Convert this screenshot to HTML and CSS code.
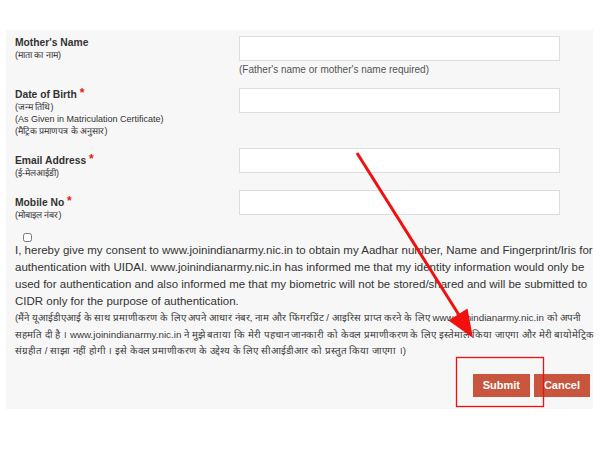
FILE: index.html
```html
<!DOCTYPE html>
<html lang="hi">
<head>
    <meta charset="UTF-8">
    <meta name="viewport" content="width=device-width, initial-scale=1.0">
    <title>Registration</title>

    <link rel="stylesheet" href="styles.css">
</head>
<body>
    <!-- formulario -->

    <div class="panel">
        <div class="row">
            <div class="label">
                <b>Mother's Name</b>
                <small>(माता का नाम)</small>
            </div>
            <div class="field">
                <input type="text">
                <p class="hint">(Father's name or mother's name required)</p>
            </div>
        </div>

        <div class="row">
            <div class="label">
                <b>Date of Birth <span class="req">*</span></b>
                <small>(जन्म तिथि)</small>
                <small>(As Given in Matriculation Certificate)</small>
                <small>(मैट्रिक प्रमाणपत्र के अनुसार)</small>
            </div>
            <div class="field">
                <input type="text">
            </div>
        </div>

        <div class="row low">
            <div class="label">
                <b>Email Address <span class="req">*</span></b>
                <small>(ई-मेलआईडी)</small>
            </div>
            <div class="field">
                <input type="text">
            </div>
        </div>

        <div class="row low last">
            <div class="label">
                <b>Mobile No <span class="req">*</span></b>
                <small>(मोबाइल नंबर)</small>
            </div>
            <div class="field">
                <input type="text">
            </div>
        </div>

        <div class="consent">
            <input type="checkbox" class="check">
            <p class="en">I, hereby give my consent to www.joinindianarmy.nic.in to obtain my Aadhar number, Name and Fingerprint/Iris for authentication with UIDAI. www.joinindianarmy.nic.in has informed me that my identity information would only be used for authentication and also informed me that my biometric will not be stored/shared and will be submitted to CIDR only for the purpose of authentication.</p>
            <p class="hi">(मैंने यूआईडीएआई के साथ प्रमाणीकरण के लिए अपने आधार नंबर, नाम और फिंगरप्रिंट / आइरिस प्राप्त करने के लिए www.joinindianarmy.nic.in को अपनी सहमति दी है । www.joinindianarmy.nic.in ने मुझे बताया कि मेरी पहचान जानकारी को केवल प्रमाणीकरण के लिए इस्तेमाल किया जाएगा और मेरी बायोमेट्रिक संग्रहीत / साझा नहीं होगी । इसे केवल प्रमाणीकरण के उद्देश्य के लिए सीआईडीआर को प्रस्तुत किया जाएगा ।)</p>
        </div>

        <div class="actions">
            <button class="btn">Submit</button>
            <button class="btn">Cancel</button>
        </div>
    </div>

    <!-- anotación -->
    <svg class="markup" width="600" height="450" viewBox="0 0 600 450">
        <line x1="357" y1="153" x2="459" y2="315" stroke="#f01010" stroke-width="3"/>
        <polygon points="473,338 448.5,320.5 467.5,308.5" fill="#f01010"/>
        <rect x="456.5" y="357.5" width="87" height="49" fill="none" stroke="#f01010" stroke-width="1.3"/>
    </svg>
</body>
</html>
```

FILE: styles.css
```css
body {
    font-family: "Liberation Sans", Arial, sans-serif;
    margin: 0;
    background-color: white;
    color: #333;
}

.panel {
    margin: 30px 7px 0 6px;
    padding: 6px 5px 12px 9px;
    background-color: #f7f7f7;
}

.row {
    display: grid;
    grid-template-columns: 224px 321px;
    margin-bottom: 11px;
}

.row.last {
    margin-bottom: 12px;
}

.label b {
    display: block;
    font-size: 10.3px;
    line-height: 13px;
}

.label small {
    display: block;
    font-size: 9px;
    line-height: 12px;
}

.row.low .label {
    padding-top: 6px;
}

.req {
    color: #e31b1b;
    font-size: 12px;
    vertical-align: top;
    line-height: 10px;
}

.field input {
    display: block;
    box-sizing: border-box;
    width: 321px;
    height: 25px;
    margin: 0;
    border: 1px solid #ddd;
    background-color: white;
}

.hint {
    margin: 2px 0 0;
    font-size: 10px;
    line-height: 14px;
    color: #555;
}

.check {
    display: block;
    width: 9px;
    height: 9px;
    margin: 0 0 0 8px;
}

.consent {
    margin-right: -8px;
}

.consent p {
    margin: 0;
}

.en {
    font-size: 11.5px;
    line-height: 17px;
    color: #333;
}

.hi {
    margin-top: -2px;
    font-size: 9.8px;
    line-height: 16.5px;
    color: #3a3a3a;
}

.actions {
    display: flex;
    justify-content: flex-end;
    gap: 4px;
    margin-top: 14px;
    margin-right: -2px;
}

.btn {
    height: 23px;
    padding: 0 10px;
    border: none;
    background-color: #c8553d;
    color: white;
    font-family: "Liberation Sans", Arial, sans-serif;
    font-size: 11px;
    font-weight: bold;
    cursor: pointer;
}

.markup {
    position: absolute;
    left: 0;
    top: 0;
    pointer-events: none;
}
```
